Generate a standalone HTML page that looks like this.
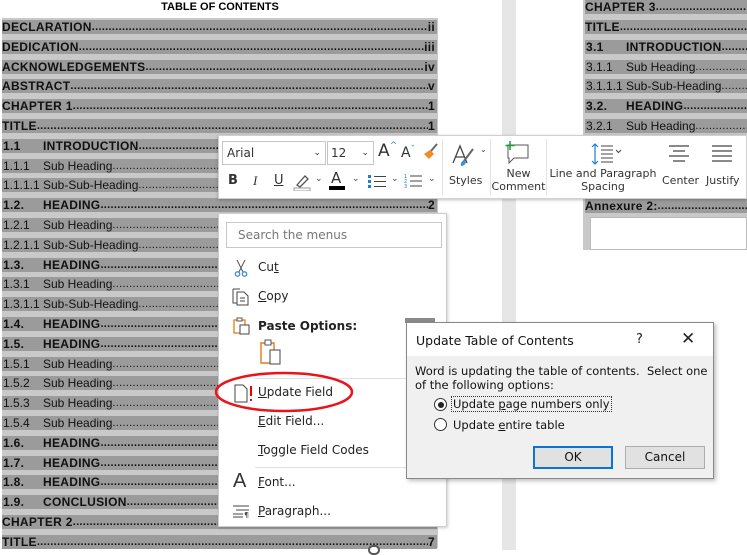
<!DOCTYPE html>
<html><head><meta charset="utf-8"><style>
*{margin:0;padding:0;box-sizing:border-box}
body{width:747px;height:550px;overflow:hidden;background:#fff;position:relative;font-family:"Liberation Sans",Arial,sans-serif;}
.abs{position:absolute}
.r{position:absolute;height:14px;background:#9b9b9b;display:flex;font-size:12px;line-height:14px;color:#111;white-space:nowrap;overflow:hidden}
.r .n{width:41px;padding-left:1px;flex:none}
.r .t{flex:none}
.r .d{flex:1;overflow:hidden;letter-spacing:0.3px;font-size:11px}
.r .p{flex:none;padding-right:2px;font-weight:bold}
.b{font-weight:bold;letter-spacing:0.3px}
.ui{font-family:"DejaVu Sans","Liberation Sans",sans-serif;}
.mi{position:absolute;left:39px;font-size:12px;color:#222}
u{text-decoration:underline}
</style></head><body>

<div class="abs" style="left:0;top:0;width:440px;text-align:center;font-weight:bold;font-size:11px;line-height:14px;padding-left:0">TABLE OF CONTENTS</div>
<div class="abs" style="left:2px;top:18px;width:436px;height:530px;background:#c9c9c9"></div>
<div class="abs" style="left:502px;top:0;width:14px;height:550px;background:#e6e6e6"></div>
<div class="abs" style="left:583px;top:0;width:164px;height:250px;background:#c9c9c9"></div>
<div class="abs" style="left:590px;top:217px;width:157px;height:33px;background:#fff;border:1px solid #bbb"></div>

<div class="r b" style="left:2px;top:20px;width:435px"><span class="t">DECLARATION</span><span class="d">..............................................................................................................................</span><span class="p">ii</span></div>
<div class="r b" style="left:2px;top:40px;width:435px"><span class="t">DEDICATION</span><span class="d">..............................................................................................................................</span><span class="p">iii</span></div>
<div class="r b" style="left:2px;top:60px;width:435px"><span class="t">ACKNOWLEDGEMENTS</span><span class="d">..............................................................................................................................</span><span class="p">iv</span></div>
<div class="r b" style="left:2px;top:79px;width:435px"><span class="t">ABSTRACT </span><span class="d">..............................................................................................................................</span><span class="p">v</span></div>
<div class="r b" style="left:2px;top:99px;width:435px"><span class="t">CHAPTER 1</span><span class="d">..............................................................................................................................</span><span class="p">1</span></div>
<div class="r b" style="left:2px;top:119px;width:435px"><span class="t">TITLE </span><span class="d">..............................................................................................................................</span><span class="p">1</span></div>
<div class="r b" style="left:2px;top:139px;width:435px"><span class="n">1.1</span><span class="t">INTRODUCTION</span><span class="d">..............................................................................................................................</span><span class="p">1</span></div>
<div class="r" style="left:2px;top:159px;width:435px"><span class="n">1.1.1</span><span class="t">Sub Heading</span><span class="d">..............................................................................................................................</span><span class="p">1</span></div>
<div class="r" style="left:2px;top:178px;width:435px"><span class="n">1.1.1.1</span><span class="t">Sub-Sub-Heading</span><span class="d">..............................................................................................................................</span><span class="p">1</span></div>
<div class="r b" style="left:2px;top:198px;width:435px"><span class="n">1.2.</span><span class="t">HEADING</span><span class="d">..............................................................................................................................</span><span class="p">2</span></div>
<div class="r" style="left:2px;top:218px;width:435px"><span class="n">1.2.1</span><span class="t">Sub Heading</span><span class="d">..............................................................................................................................</span><span class="p">2</span></div>
<div class="r" style="left:2px;top:238px;width:435px"><span class="n">1.2.1.1</span><span class="t">Sub-Sub-Heading</span><span class="d">..............................................................................................................................</span><span class="p">2</span></div>
<div class="r b" style="left:2px;top:258px;width:435px"><span class="n">1.3.</span><span class="t">HEADING</span><span class="d">..............................................................................................................................</span><span class="p">3</span></div>
<div class="r" style="left:2px;top:277px;width:435px"><span class="n">1.3.1</span><span class="t">Sub Heading</span><span class="d">..............................................................................................................................</span><span class="p">3</span></div>
<div class="r" style="left:2px;top:297px;width:435px"><span class="n">1.3.1.1</span><span class="t">Sub-Sub-Heading</span><span class="d">..............................................................................................................................</span><span class="p">3</span></div>
<div class="r b" style="left:2px;top:317px;width:435px"><span class="n">1.4.</span><span class="t">HEADING</span><span class="d">..............................................................................................................................</span><span class="p">4</span></div>
<div class="r b" style="left:2px;top:337px;width:435px"><span class="n">1.5.</span><span class="t">HEADING</span><span class="d">..............................................................................................................................</span><span class="p">4</span></div>
<div class="r" style="left:2px;top:357px;width:435px"><span class="n">1.5.1</span><span class="t">Sub Heading</span><span class="d">..............................................................................................................................</span><span class="p">4</span></div>
<div class="r" style="left:2px;top:376px;width:435px"><span class="n">1.5.2</span><span class="t">Sub Heading</span><span class="d">..............................................................................................................................</span><span class="p">5</span></div>
<div class="r" style="left:2px;top:396px;width:435px"><span class="n">1.5.3</span><span class="t">Sub Heading</span><span class="d">..............................................................................................................................</span><span class="p">5</span></div>
<div class="r" style="left:2px;top:416px;width:435px"><span class="n">1.5.4</span><span class="t">Sub Heading</span><span class="d">..............................................................................................................................</span><span class="p">5</span></div>
<div class="r b" style="left:2px;top:436px;width:435px"><span class="n">1.6.</span><span class="t">HEADING</span><span class="d">..............................................................................................................................</span><span class="p">6</span></div>
<div class="r b" style="left:2px;top:456px;width:435px"><span class="n">1.7.</span><span class="t">HEADING</span><span class="d">..............................................................................................................................</span><span class="p">6</span></div>
<div class="r b" style="left:2px;top:475px;width:435px"><span class="n">1.8.</span><span class="t">HEADING</span><span class="d">..............................................................................................................................</span><span class="p">6</span></div>
<div class="r b" style="left:2px;top:495px;width:435px"><span class="n">1.9.</span><span class="t">CONCLUSION </span><span class="d">..............................................................................................................................</span><span class="p">6</span></div>
<div class="r b" style="left:2px;top:515px;width:435px"><span class="t">CHAPTER 2</span><span class="d">..............................................................................................................................</span><span class="p">7</span></div>
<div class="r b" style="left:2px;top:535px;width:435px"><span class="t">TITLE </span><span class="d">..............................................................................................................................</span><span class="p">7</span></div>
<div class="abs" style="left:368px;top:545px;width:12px;height:10px;border:2px solid #555;border-radius:6px;background:#fff"></div>

<!-- right page -->
<div class="r b" style="left:585px;top:0;width:162px"><span class="t">CHAPTER 3</span><span class="d">.............................................................</span></div>
<div class="r b" style="left:585px;top:20px;width:162px"><span class="t">TITLE </span><span class="d">.............................................................</span></div>
<div class="r b" style="left:585px;top:40px;width:162px"><span class="n">3.1</span><span class="t">INTRODUCTION</span><span class="d">.............................................................</span></div>
<div class="r" style="left:585px;top:60px;width:162px"><span class="n">3.1.1</span><span class="t">Sub Heading</span><span class="d">.............................................................</span></div>
<div class="r" style="left:585px;top:79px;width:162px"><span class="n">3.1.1.1</span><span class="t">Sub-Sub-Heading</span><span class="d">.............................................................</span></div>
<div class="r b" style="left:585px;top:99px;width:162px"><span class="n">3.2.</span><span class="t">HEADING</span><span class="d">.............................................................</span></div>
<div class="r" style="left:585px;top:119px;width:162px"><span class="n">3.2.1</span><span class="t">Sub Heading</span><span class="d">.............................................................</span></div>
<div class="r b" style="left:585px;top:199px;width:162px"><span class="t">Annexure 2: </span><span class="d">.............................................................</span></div>

<!-- toolbar -->
<div class="abs ui" style="left:218px;top:135px;width:529px;height:64px;background:#fff;border:1px solid #d0d0d0;box-shadow:0 1px 3px rgba(0,0,0,.25)">
  <div class="abs" style="left:3px;top:5px;width:104px;height:24px;border:1px solid #c6c6c6;font-size:12px;line-height:22px;padding-left:4px;color:#333">Arial<span class="abs" style="right:4px;top:0;font-size:9px">&#8964;</span></div>
  <div class="abs" style="left:108px;top:5px;width:47px;height:24px;border:1px solid #c6c6c6;font-size:12px;line-height:22px;padding-left:3px;color:#333">12<span class="abs" style="right:4px;top:0;font-size:9px">&#8964;</span></div>
  <div class="abs" style="left:159px;top:5px;font-size:17px;color:#333">A<span style="font-size:9px;color:#3a8fd8;vertical-align:top">^</span></div>
  <div class="abs" style="left:182px;top:9px;font-size:14px;color:#333">A<span style="font-size:9px;color:#3a8fd8;vertical-align:top">&#711;</span></div>
  <svg class="abs" style="left:203px;top:6px" width="18" height="18"><path d="M15 2 L9 9" stroke="#666" stroke-width="2"/><path d="M8 8 L12 12 L7 17 L2 12 Z" fill="#f08a24"/></svg>
  <div class="abs" style="left:9px;top:37px;font-size:13px;font-weight:bold;color:#333">B</div>
  <div class="abs" style="left:34px;top:37px;font-size:13px;font-style:italic;font-family:'Liberation Serif',serif;color:#333">I</div>
  <div class="abs" style="left:55px;top:37px;font-size:13px;text-decoration:underline;color:#333">U</div>
  <svg class="abs" style="left:74px;top:37px" width="18" height="18"><path d="M4 12 L12 3 L15 6 L7 14 Z" fill="none" stroke="#555" stroke-width="1.3"/><rect x="1" y="15" width="16" height="3" fill="#fff" stroke="#999"/></svg>
  <div class="abs" style="left:96px;top:38px;font-size:9px;color:#444">&#8964;</div>
  <div class="abs" style="left:112px;top:33px;font-size:15px;color:#333">A</div>
  <div class="abs" style="left:110px;top:50px;width:16px;height:4px;background:#000"></div>
  <div class="abs" style="left:133px;top:38px;font-size:9px;color:#444">&#8964;</div>
  <svg class="abs" style="left:148px;top:37px" width="20" height="16"><rect x="1" y="2" width="3" height="3" fill="#1e7fd0"/><rect x="1" y="7" width="3" height="3" fill="#1e7fd0"/><rect x="1" y="12" width="3" height="3" fill="#1e7fd0"/><path d="M7 3.5H19M7 8.5H19M7 13.5H19" stroke="#444"/></svg>
  <div class="abs" style="left:172px;top:38px;font-size:9px;color:#444">&#8964;</div>
  <svg class="abs" style="left:185px;top:36px" width="20" height="18"><text x="0" y="6" font-size="5" fill="#1e7fd0">1</text><text x="0" y="11" font-size="5" fill="#1e7fd0">2</text><text x="0" y="16" font-size="5" fill="#1e7fd0">3</text><path d="M6 4H18M6 9H18M6 14H18" stroke="#444"/></svg>
  <div class="abs" style="left:209px;top:38px;font-size:9px;color:#444">&#8964;</div>
  <div class="abs" style="left:223px;top:3px;width:1px;height:56px;background:#e3e3e3"></div>
  <svg class="abs" style="left:232px;top:7px" width="30" height="26"><path d="M2 20 L9 3 L16 20 M5 14 H13" stroke="#444" fill="none" stroke-width="1.3"/><path d="M22 6 L13 18" stroke="#666" stroke-width="2"/><path d="M13 17 q-4 2 -3 6 q4 0 5-4z" fill="#3a8fd8"/></svg>
  <div class="abs" style="left:261px;top:9px;font-size:8px;color:#444">&#8964;</div>
  <div class="abs" style="left:230px;top:38px;font-size:11px;color:#333">Styles</div>
  <div class="abs" style="left:271px;top:3px;width:1px;height:56px;background:#e3e3e3"></div>
  <svg class="abs" style="left:284px;top:4px" width="28" height="24"><path d="M5 5 H25 V18 H11 L6 23 V18 H5 Z" fill="#fff" stroke="#555"/><path d="M7 1 V10 M2.5 5.5 H11.5" stroke="#1c9b3e" stroke-width="1.5"/></svg>
  <div class="abs" style="left:272px;top:31px;width:55px;text-align:center;font-size:11px;line-height:13px;color:#333">New<br>Comment</div>
  <div class="abs" style="left:327px;top:3px;width:1px;height:56px;background:#e3e3e3"></div>
  <svg class="abs" style="left:372px;top:6px" width="34" height="24"><path d="M4 2 V22 M1 5 L4 2 L7 5 M1 19 L4 22 L7 19" stroke="#1e7fd0" fill="none" stroke-width="1.2"/><path d="M10 4H22M10 8H22M10 12H22M10 16H22M10 20H22" stroke="#444"/><path d="M25 8 L27.5 10.5 L30 8" stroke="#444" fill="none"/></svg>
  <div class="abs" style="left:328px;top:31px;width:112px;text-align:center;font-size:11px;line-height:13px;color:#333">Line and Paragraph<br>Spacing</div>
  <svg class="abs" style="left:448px;top:8px" width="24" height="20"><path d="M2 2H22M6 7H18M2 12H22M6 17H18" stroke="#444" stroke-width="1.2"/></svg>
  <div class="abs" style="left:443px;top:38px;font-size:11px;color:#333">Center</div>
  <svg class="abs" style="left:491px;top:8px" width="24" height="20"><path d="M2 2H22M2 7H22M2 12H22M2 17H22" stroke="#444" stroke-width="1.2"/></svg>
  <div class="abs" style="left:487px;top:38px;font-size:11px;color:#333">Justify</div>
</div>

<!-- context menu -->
<div class="abs ui" style="left:218px;top:213px;width:229px;height:314px;background:#fff;border:1px solid #ccc;box-shadow:1px 1px 3px rgba(0,0,0,.2)">
  <div class="abs" style="left:7px;top:8px;width:216px;height:26px;border:1px solid #c8c8c8;font-size:12px;line-height:24px;padding-left:11px;color:#777">Search the menus</div>
  <svg class="abs" style="left:14px;top:45px" width="16" height="18"><path d="M4 1 L10 13 M12 1 L6 13" stroke="#555"/><circle cx="4.5" cy="15" r="2.2" fill="none" stroke="#3a8fd8" stroke-width="1.3"/><circle cx="11.5" cy="15" r="2.2" fill="none" stroke="#3a8fd8" stroke-width="1.3"/></svg>
  <div class="mi" style="top:46px">Cu<u>t</u></div>
  <svg class="abs" style="left:13px;top:74px" width="18" height="18"><path d="M1 1 H8 M1 1 V15 H5" stroke="#444" fill="none"/><path d="M5 4 H12 L16 8 V17 H5 Z" fill="#fff" stroke="#444"/><path d="M8 10H13M8 13H13" stroke="#444"/></svg>
  <div class="mi" style="top:75px"><u>C</u>opy</div>
  <svg class="abs" style="left:13px;top:103px" width="18" height="18"><path d="M2 3 H13 V16 H2 Z" fill="#fff" stroke="#e07b1a" stroke-width="1.3"/><rect x="5" y="1" width="5" height="3" fill="#fff" stroke="#555"/><rect x="8" y="8" width="9" height="9" fill="#fff" stroke="#444"/></svg>
  <div class="mi" style="top:105px;font-weight:bold">Paste Options:</div>
  <svg class="abs" style="left:40px;top:125px" width="24" height="26"><path d="M2 4 H15 V24 H2 Z" fill="#fff" stroke="#e07b1a" stroke-width="1.4"/><rect x="6" y="1" width="6" height="5" fill="#fff" stroke="#555"/><rect x="11" y="11" width="10" height="14" fill="#fff" stroke="#444"/></svg>
  <div class="abs" style="left:36px;top:164px;width:192px;height:1px;background:#e0e0e0"></div>
  <svg class="abs" style="left:14px;top:170px" width="22" height="20"><path d="M2 1 H10 L14 5 V18 H2 Z" fill="#fff" stroke="#444"/><path d="M18 2 V12" stroke="#e00" stroke-width="2"/><rect x="17" y="15" width="2" height="2" fill="#e00"/></svg>
  <div class="mi" style="top:171px"><u>U</u>pdate Field</div>
  <div class="mi" style="top:200px"><u>E</u>dit Field...</div>
  <div class="mi" style="top:229px"><u>T</u>oggle Field Codes</div>
  <div class="abs" style="left:36px;top:253px;width:192px;height:1px;background:#e0e0e0"></div>
  <div class="abs" style="left:14px;top:256px;font-size:20px;color:#333;font-family:'Liberation Sans',sans-serif">A</div>
  <div class="mi" style="top:261px"><u>F</u>ont...</div>
  <svg class="abs" style="left:13px;top:290px" width="20" height="14"><path d="M1 2H17M4 6H17M1 10H11M1 13H11" stroke="#444"/><text x="12" y="14" font-size="8" fill="#444">¶</text></svg>
  <div class="mi" style="top:290px"><u>P</u>aragraph...</div>
</div>
<svg class="abs" style="left:212px;top:370px" width="145" height="45"><ellipse cx="72" cy="22" rx="68" ry="19" fill="none" stroke="#e8141b" stroke-width="2.5"/></svg>

<!-- dialog -->
<div class="abs" style="left:405px;top:318px;width:30px;height:5px;background:#8a8a8a"></div>
<div class="abs ui" style="left:406px;top:322px;width:308px;height:157px;background:#f0f0f0;border:1px solid #888;box-shadow:2px 2px 4px rgba(0,0,0,.25)">
  <div class="abs" style="left:0;top:0;width:306px;height:33px;background:#fff"></div>
  <div class="abs" style="left:9px;top:10px;font-size:12.5px;color:#111">Update Table of Contents</div>
  <div class="abs" style="left:229px;top:9px;font-size:13px;color:#222">?</div>
  <div class="abs" style="left:274px;top:6px;font-size:17px;color:#222">&#10005;</div>
  <div class="abs" style="left:8px;top:41px;font-size:11.5px;line-height:14px;color:#111">Word is updating the table of contents.&nbsp; Select one<br>of the following options:</div>
  <div class="abs" style="left:27px;top:75px;width:13px;height:13px;border:1px solid #333;border-radius:50%;background:#fff"><div style="margin:2.5px;width:6px;height:6px;border-radius:50%;background:#222"></div></div>
  <div class="abs" style="left:44px;top:73px;font-size:11.5px;border:1px dotted #333;padding:0 1px;color:#111">Update <u>p</u>age numbers only</div>
  <div class="abs" style="left:27px;top:95px;width:13px;height:13px;border:1px solid #333;border-radius:50%;background:#fff"></div>
  <div class="abs" style="left:46px;top:95px;font-size:11.5px;color:#111">Update <u>e</u>ntire table</div>
  <div class="abs" style="left:126px;top:123px;width:80px;height:23px;border:2px solid #0a74d4;background:#e1e1e1;text-align:center;font-size:12px;line-height:19px;color:#111">OK</div>
  <div class="abs" style="left:218px;top:123px;width:80px;height:23px;border:1px solid #adadad;background:#e1e1e1;text-align:center;font-size:12px;line-height:21px;color:#111">Cancel</div>
</div>
</body></html>
